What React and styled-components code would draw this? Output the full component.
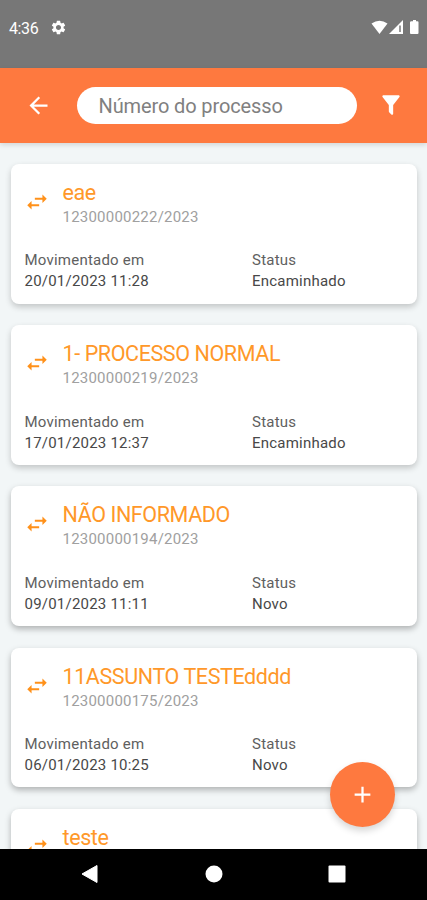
// Libraries
import React from 'react';

// Styles
import styled, { createGlobalStyle } from 'styled-components';

// Icons
import { MdAdd, MdArrowBack, MdSettings, MdSwapHoriz } from 'react-icons/md';

const GlobalStyle = createGlobalStyle`
  * {
    box-sizing: border-box;
  }
  body {
    margin: 0;
    font-family: Roboto, sans-serif;
  }
`;

const ScreenStyle = styled.div`
  position: relative;
  display: flex;
  flex-direction: column;
  width: 100%;
  height: 900px;
  overflow: hidden;
  background: #f2f6f7;
`;

const StatusBarStyle = styled.div`
  display: flex;
  flex: none;
  align-items: flex-start;
  justify-content: space-between;
  height: 67.5px;
  padding: 18px 7px 0 9px;
  background: #777;
  color: #fff;
`;

const StatusGroupStyle = styled.div`
  display: flex;
  align-items: center;
  height: 18px;
`;

const ClockStyle = styled.span`
  width: 41px;
  padding-top: 2px;
  font-size: 16px;
  letter-spacing: -0.4px;
`;

const HeaderStyle = styled.header`
  z-index: 1;
  display: flex;
  flex: none;
  align-items: center;
  justify-content: space-between;
  height: 75.5px;
  padding: 0 23px 0 25px;
  background: #fe793f;
  box-shadow: 0 2px 5px rgba(0, 0, 0, 0.13);
  color: #fff;
`;

const IconButtonStyle = styled.button`
  display: flex;
  padding: 0;
  border: 0;
  background: none;
  color: inherit;
`;

const SearchInputStyle = styled.input`
  width: 280px;
  height: 37px;
  margin-left: 3px;
  padding: 2px 22px 0;
  border: 0;
  border-radius: 19px;
  background: #fff;
  color: #808080;
  font-family: inherit;
  font-size: 20px;
  letter-spacing: -0.12px;
  &::placeholder {
    color: #808080;
  }
`;

const ListStyle = styled.main`
  display: flex;
  flex: 1;
  flex-direction: column;
  gap: 21.6px;
  min-height: 0;
  padding: 21px 10px 0 11px;
  overflow: hidden;
`;

const CardStyle = styled.article`
  flex: none;
  height: 139.6px;
  padding: 15px 14px 0 13.5px;
  border-radius: 8px;
  background: #fff;
  box-shadow: 0 3px 6px
    ${(props) => (props.$raised ? 'rgba(0, 0, 0, 0.28)' : 'rgba(0, 0, 0, 0.2)')};
`;

const CardHeaderStyle = styled.div`
  display: flex;
  height: 71.4px;
  svg {
    flex: none;
    margin: 10px 12.5px 0 -0.5px;
    color: #ff911a;
  }
`;

const CardTitleStyle = styled.h2`
  margin: 0;
  color: #ff9829;
  font-size: 21.5px;
  font-weight: 400;
  letter-spacing: -0.4px;
  line-height: 28px;
`;

const CardNumberStyle = styled.p`
  margin: 0;
  color: #a0a0a0;
  font-size: 15px;
  letter-spacing: 0.22px;
  line-height: 21px;
`;

const CardFieldsStyle = styled.div`
  display: grid;
  grid-template-columns: 227.5px 1fr;
`;

const FieldStyle = styled.div`
  font-size: 15px;
  line-height: 21px;
  letter-spacing: 0.22px;
`;

const FieldLabelStyle = styled.div`
  color: #606060;
`;

const FieldValueStyle = styled.div`
  color: #484848;
`;

const FabStyle = styled.button`
  position: absolute;
  z-index: 2;
  right: 32px;
  bottom: 73.5px;
  display: flex;
  align-items: center;
  justify-content: center;
  width: 65px;
  height: 65px;
  padding: 0;
  border: 0;
  border-radius: 50%;
  background: #fe793f;
  box-shadow: 0 4px 7px rgba(0, 0, 0, 0.16);
  color: #fff;
`;

const NavBarStyle = styled.nav`
  z-index: 1;
  display: flex;
  flex: none;
  align-items: center;
  justify-content: space-between;
  height: 51px;
  padding: 0 81px 1px;
  background: #000;
`;

const processes = [
  { title: 'eae', number: '12300000222/2023', date: '20/01/2023 11:28', status: 'Encaminhado' },
  { title: '1- PROCESSO NORMAL', number: '12300000219/2023', date: '17/01/2023 12:37', status: 'Encaminhado' },
  { title: 'NÃO INFORMADO', number: '12300000194/2023', date: '09/01/2023 11:11', status: 'Novo' },
  { title: '11ASSUNTO TESTEdddd', number: '12300000175/2023', date: '06/01/2023 10:25', status: 'Novo' },
  { title: 'teste', number: '', date: '', status: '' },
];

// Components
const StatusBar = function () {
  return (
    <StatusBarStyle>
      <StatusGroupStyle>
        <ClockStyle>4:36</ClockStyle>
        <MdSettings size={17} />
      </StatusGroupStyle>
      <StatusGroupStyle>
        <svg width="49" height="16" viewBox="0 0 49 16" fill="#fff">
          <path d="M0.500 4.500Q8.500 -0.800 16.500 4.500L8.500 15Z" />
          <path d="M32 1V15H18Z" />
          <path d="M29 6.500V13" stroke="#777" strokeWidth="1.500" />
          <path d="M40.500 2.300H42V1H45V2.300H46.500Q47.500 2.300 47.500 3.300V14Q47.500 15 46.500 15H40Q39 15 39 14V3.300Q39 2.300 40.500 2.300Z" />
        </svg>
      </StatusGroupStyle>
    </StatusBarStyle>
  );
};

const FilterIcon = function () {
  return (
    <svg width="26" height="26" viewBox="0 0 24 24" fill="currentColor">
      <path d="M14 12v7.880c.04.3-.06.620-.290.830a1 1 0 0 1-1.410 0l-2.010-2.010a.99.99 0 0 1-.290-.830V12h-.030L4.210 4.620a1 1 0 0 1 .170-1.400c.190-.140.400-.220.620-.220h14c.220 0 .430.080.620.220a1 1 0 0 1 .170 1.400L14.030 12H14z" />
    </svg>
  );
};

const Header = function () {
  return (
    <HeaderStyle>
      <IconButtonStyle aria-label="Voltar">
        <MdArrowBack size={27} />
      </IconButtonStyle>
      <SearchInputStyle placeholder="Número do processo" />
      <IconButtonStyle aria-label="Filtrar">
        <FilterIcon />
      </IconButtonStyle>
    </HeaderStyle>
  );
};

const Field = function (props) {
  const { label, value } = props;
  return (
    <FieldStyle>
      <FieldLabelStyle>{label}</FieldLabelStyle>
      <FieldValueStyle>{value}</FieldValueStyle>
    </FieldStyle>
  );
};

const ProcessCard = function (props) {
  const { process, raised } = props;
  return (
    <CardStyle $raised={raised}>
      <CardHeaderStyle>
        <MdSwapHoriz size={26} />
        <div>
          <CardTitleStyle>{process.title}</CardTitleStyle>
          <CardNumberStyle>{process.number}</CardNumberStyle>
        </div>
      </CardHeaderStyle>
      {process.date && (
        <CardFieldsStyle>
          <Field label="Movimentado em" value={process.date} />
          <Field label="Status" value={process.status} />
        </CardFieldsStyle>
      )}
    </CardStyle>
  );
};

const NavBar = function () {
  return (
    <NavBarStyle>
      <svg width="18" height="20" viewBox="0 0 18 20">
        <path d="M1 10L16 1.500V18.500Z" fill="#fff" stroke="#fff" strokeLinejoin="round" />
      </svg>
      <svg width="18" height="18" viewBox="0 0 18 18">
        <circle cx="9" cy="9" r="8.500" fill="#fff" />
      </svg>
      <svg width="18" height="18" viewBox="0 0 18 18">
        <rect x="0.500" y="0.500" width="17" height="17" rx="1" fill="#fff" />
      </svg>
    </NavBarStyle>
  );
};

const App = function () {
  return (
    <ScreenStyle>
      <GlobalStyle />
      <StatusBar />
      <Header />
      <ListStyle>
        {processes.map((process, index) => (
          <ProcessCard key={process.title} process={process} raised={index > 1} />
        ))}
      </ListStyle>
      <FabStyle aria-label="Adicionar">
        <MdAdd size={27} />
      </FabStyle>
      <NavBar />
    </ScreenStyle>
  );
};

export default App;
